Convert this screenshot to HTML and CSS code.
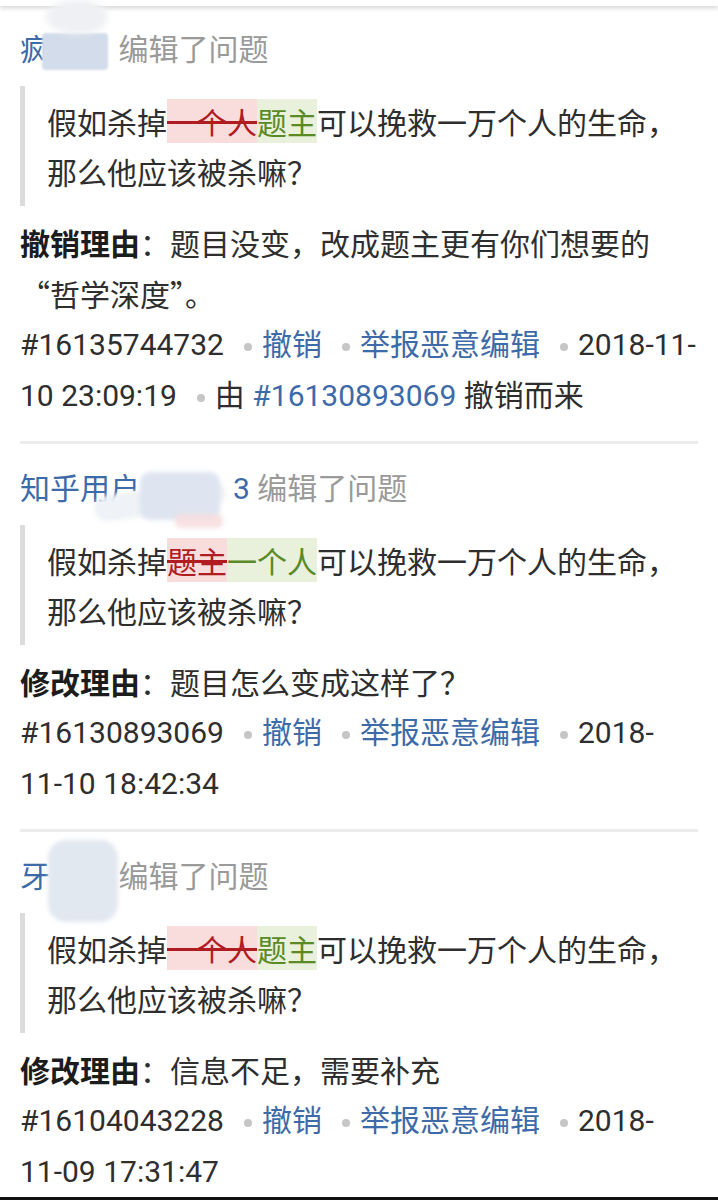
FILE: index.html
```html
<!DOCTYPE html>
<html lang="zh-CN">
<head>
    <meta charset="UTF-8">
    <meta name="viewport" content="width=device-width, initial-scale=1.0">
    <title>问题日志</title>
    <link rel="stylesheet" href="styles.css">
</head>
<body>
    <div class="topbar"></div>
    <div class="logs">
        <div class="log">
            <div class="log-head">
                <a class="user" href="#">疯<span class="mask"></span></a> <span class="action">编辑了问题</span>
                <span class="smudge s1a"></span>
                <span class="smudge s1b"></span>
            </div>
            <blockquote class="diff">假如杀掉<del>一个人</del><ins>题主</ins>可以挽救一万个人的生命，那么他应该被杀嘛？</blockquote>
            <p class="reason"><strong>撤销理由</strong>：题目没变，改成题主更有你们想要的<span class="cjk">“哲学深度”。</span></p>
            <p class="meta">#16135744732<span class="dot"></span><a href="#">撤销</a><span class="dot"></span><a href="#">举报恶意编辑</a><span class="dot"></span>2018-11-<wbr>10 23:09:19<span class="dot"></span>由 <a href="#">#16130893069</a> 撤销而来</p>
        </div>

        <div class="log">
            <div class="log-head">
                <a class="user" href="#">知乎用户<span class="mask wide"></span>3</a> <span class="action">编辑了问题</span>
                <span class="smudge s2a"></span>
                <span class="smudge s2b"></span>
                <span class="smudge s2c"></span>
            </div>
            <blockquote class="diff">假如杀掉<del>题主</del><ins>一个人</ins>可以挽救一万个人的生命，那么他应该被杀嘛？</blockquote>
            <p class="reason"><strong>修改理由</strong>：题目怎么变成这样了？</p>
            <p class="meta">#16130893069<span class="dot"></span><a href="#">撤销</a><span class="dot"></span><a href="#">举报恶意编辑</a><span class="dot"></span>2018-<wbr><span class="nobr">11-10</span> 18:42:34</p>
        </div>

        <div class="log">
            <div class="log-head">
                <a class="user" href="#">牙<span class="mask"></span></a> <span class="action">编辑了问题</span>
                <span class="smudge s3a"></span>
            </div>
            <blockquote class="diff">假如杀掉<del>一个人</del><ins>题主</ins>可以挽救一万个人的生命，那么他应该被杀嘛？</blockquote>
            <p class="reason"><strong>修改理由</strong>：信息不足，需要补充</p>
            <p class="meta">#16104043228<span class="dot"></span><a href="#">撤销</a><span class="dot"></span><a href="#">举报恶意编辑</a><span class="dot"></span>2018-<wbr><span class="nobr">11-09</span> 17:31:47</p>
        </div>
    </div>
    <div class="screen-edge"></div>
</body>
</html>
```

FILE: styles.css
```css
* {
    margin: 0;
    padding: 0;
    box-sizing: border-box;
}

body {
    font-family: "Noto Sans CJK SC", sans-serif;
    font-size: 30px;
    color: #2e2e2e;
    background: #fff;
}

a {
    color: #3d6aa8;
    text-decoration: none;
}

.topbar {
    position: relative;
    z-index: 1;
    height: 6px;
    background: #fff;
    box-shadow: 0 2px 5px rgba(0, 0, 0, 0.18);
}

.logs {
    padding: 0 20px;
}

.log {
    padding: 20px 0 20px;
    border-bottom: 3px solid #ececec;
}

.log:first-child {
    padding-top: 19px;
}

.log-head {
    position: relative;
    line-height: 50px;
    font-family: Roboto, "Noto Sans CJK SC", sans-serif;
}

.action {
    color: #9a9a9a;
}

.mask {
    display: inline-block;
    width: 61px;
    height: 1px;
}

.mask.wide {
    width: 93px;
}

/* blurred-out user names */
.smudge {
    position: absolute;
    z-index: 2;
    pointer-events: none;
}

.s1a {
    left: 22px;
    top: 8px;
    width: 66px;
    height: 37px;
    background: #d3dcea;
    border-radius: 4px;
    filter: blur(1px);
}

.s1b {
    left: 26px;
    top: -25px;
    width: 62px;
    height: 34px;
    background: #eef0f3;
    border-radius: 50%;
    filter: blur(3px);
}

.s2a {
    left: 74px;
    top: 24px;
    width: 132px;
    height: 26px;
    background: rgba(238, 241, 246, 0.95);
    border-radius: 14px;
    transform: rotate(-8deg);
    filter: blur(2px);
}

.s2b {
    left: 120px;
    top: 8px;
    width: 80px;
    height: 48px;
    background: rgba(220, 228, 239, 0.95);
    border-radius: 10px;
    filter: blur(2px);
}

.s2c {
    left: 155px;
    top: 50px;
    width: 48px;
    height: 14px;
    background: rgba(246, 222, 224, 0.9);
    border-radius: 6px;
    filter: blur(2px);
}

.s3a {
    left: 28px;
    top: -12px;
    width: 70px;
    height: 82px;
    background: #e2e8f0;
    border-radius: 18px;
    filter: blur(2px);
}

.diff {
    margin-top: 11px;
    padding: 10px 0 10px 22px;
    border-left: 5px solid #dcdcdc;
    line-height: 50px;
}

.diff del {
    background: #f9dddd;
    color: #b01c1f;
    text-decoration: line-through;
    text-decoration-thickness: 3px;
}

.diff ins {
    background: #e9f0dc;
    color: #5a8a26;
    text-decoration: none;
}

.reason {
    margin-top: 11px;
    line-height: 51px;
}

.reason strong {
    color: #1c1c1c;
}

.cjk {
    font-family: "Noto Sans CJK SC", sans-serif;
    font-variant-east-asian: full-width;
}

.meta {
    line-height: 51px;
    font-family: Roboto, "Noto Sans CJK SC", sans-serif;
}

.nobr {
    white-space: nowrap;
}

.dot {
    display: inline-block;
    width: 8px;
    height: 8px;
    margin: 0 10px 0 20px;
    border-radius: 50%;
    background: #c6c6c6;
    vertical-align: middle;
}

.screen-edge {
    position: fixed;
    left: 0;
    right: 0;
    bottom: 0;
    height: 3px;
    background: #111;
}
```
